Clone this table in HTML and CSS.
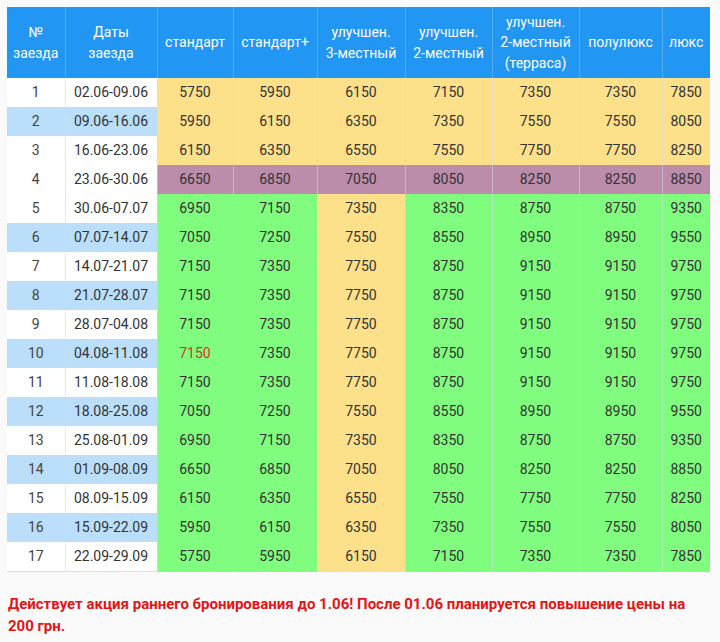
FILE: index.html
```html
<!DOCTYPE html>
<html lang="ru">
<head>
<meta charset="utf-8">
<title>Цены</title>
<link rel="stylesheet" href="styles.css">
</head>
<body>
<table class="prices">
  <colgroup>
    <col class="c1"><col class="c2"><col class="c3"><col class="c4"><col class="c5"><col class="c6"><col class="c7"><col class="c8"><col class="c9">
  </colgroup>
  <thead>
    <tr>
      <th>№<br>заезда</th>
      <th>Даты<br>заезда</th>
      <th>стандарт</th>
      <th>стандарт+</th>
      <th>улучшен.<br>3-местный</th>
      <th>улучшен.<br>2-местный</th>
      <th>улучшен.<br>2-местный<br>(терраса)</th>
      <th>полулюкс</th>
      <th>люкс</th>
    </tr>
  </thead>
  <tbody>
    <tr class="early"><td>1</td><td>02.06-09.06</td><td>5750</td><td>5950</td><td>6150</td><td>7150</td><td>7350</td><td>7350</td><td>7850</td></tr>
    <tr class="early alt"><td>2</td><td>09.06-16.06</td><td>5950</td><td>6150</td><td>6350</td><td>7350</td><td>7550</td><td>7550</td><td>8050</td></tr>
    <tr class="early"><td>3</td><td>16.06-23.06</td><td>6150</td><td>6350</td><td>6550</td><td>7550</td><td>7750</td><td>7750</td><td>8250</td></tr>
    <tr class="peak"><td>4</td><td>23.06-30.06</td><td>6650</td><td>6850</td><td>7050</td><td>8050</td><td>8250</td><td>8250</td><td>8850</td></tr>
    <tr class="summer"><td>5</td><td>30.06-07.07</td><td>6950</td><td>7150</td><td class="y">7350</td><td>8350</td><td>8750</td><td>8750</td><td>9350</td></tr>
    <tr class="summer alt"><td>6</td><td>07.07-14.07</td><td>7050</td><td>7250</td><td class="y">7550</td><td>8550</td><td>8950</td><td>8950</td><td>9550</td></tr>
    <tr class="summer"><td>7</td><td>14.07-21.07</td><td>7150</td><td>7350</td><td class="y">7750</td><td>8750</td><td>9150</td><td>9150</td><td>9750</td></tr>
    <tr class="summer alt"><td>8</td><td>21.07-28.07</td><td>7150</td><td>7350</td><td class="y">7750</td><td>8750</td><td>9150</td><td>9150</td><td>9750</td></tr>
    <tr class="summer"><td>9</td><td>28.07-04.08</td><td>7150</td><td>7350</td><td class="y">7750</td><td>8750</td><td>9150</td><td>9150</td><td>9750</td></tr>
    <tr class="summer alt"><td>10</td><td>04.08-11.08</td><td class="hot">7150</td><td>7350</td><td class="y">7750</td><td>8750</td><td>9150</td><td>9150</td><td>9750</td></tr>
    <tr class="summer"><td>11</td><td>11.08-18.08</td><td>7150</td><td>7350</td><td class="y">7750</td><td>8750</td><td>9150</td><td>9150</td><td>9750</td></tr>
    <tr class="summer alt"><td>12</td><td>18.08-25.08</td><td>7050</td><td>7250</td><td class="y">7550</td><td>8550</td><td>8950</td><td>8950</td><td>9550</td></tr>
    <tr class="summer"><td>13</td><td>25.08-01.09</td><td>6950</td><td>7150</td><td class="y">7350</td><td>8350</td><td>8750</td><td>8750</td><td>9350</td></tr>
    <tr class="summer alt"><td>14</td><td>01.09-08.09</td><td>6650</td><td>6850</td><td class="y">7050</td><td>8050</td><td>8250</td><td>8250</td><td>8850</td></tr>
    <tr class="summer"><td>15</td><td>08.09-15.09</td><td>6150</td><td>6350</td><td class="y">6550</td><td>7550</td><td>7750</td><td>7750</td><td>8250</td></tr>
    <tr class="summer alt"><td>16</td><td>15.09-22.09</td><td>5950</td><td>6150</td><td class="y">6350</td><td>7350</td><td>7550</td><td>7550</td><td>8050</td></tr>
    <tr class="summer last"><td>17</td><td>22.09-29.09</td><td>5750</td><td>5950</td><td class="y">6150</td><td>7150</td><td>7350</td><td>7350</td><td>7850</td></tr>
  </tbody>
</table>
<p class="note">Действует акция раннего бронирования до 1.06! После 01.06 планируется повышение цены на 200 грн.</p>
</body>
</html>
```

FILE: styles.css
```css
html, body {
  margin: 0;
  background: #fafafa;
}
body {
  padding: 7px 10px 0 7px;
  font-family: Roboto, "Liberation Sans", sans-serif;
  font-size: 14px;
  color: #333;
}
.prices {
  width: 703px;
  table-layout: fixed;
  border-collapse: collapse;
  border-spacing: 0;
}
.c1 { width: 58px; }
.c2 { width: 92px; }
.c3 { width: 76px; }
.c4 { width: 84px; }
.c5 { width: 88px; }
.c6 { width: 87px; }
.c7 { width: 87px; }
.c8 { width: 83px; }
.c9 { width: 48px; }

.prices th {
  background: #2196f3;
  color: #fff;
  font-weight: 400;
  height: 71px;
  padding: 0;
  line-height: 20.5px;
  text-align: center;
  vertical-align: middle;
  border-left: 1px solid rgba(255, 255, 255, 0.22);
}
.prices th:first-child { border-left: none; }

.prices td {
  height: 29px;
  padding: 0;
  line-height: 29px;
  text-align: center;
  vertical-align: middle;
  white-space: nowrap;
  border-left: 1px solid rgba(205, 220, 235, 0.55);
}
.prices td:first-child { border-left: none; color: #444; }

.prices tr td:nth-child(-n+2) { background: #fff; }
.prices tr.alt td:nth-child(-n+2) { background: #bbdefb; }

.prices tr.early td:nth-child(n+3) { background: #fde08a; }
.prices tr.peak td:nth-child(n+3) { background: #bb8dab; }
.prices tr.summer td:nth-child(n+3) { background: #80fd7e; }
.prices tr.summer td.y { background: #fde08a; }

.prices tr.last td { border-bottom: 1px solid #d3dfea; }
.prices tr.last td:nth-child(n+3) { border-bottom-color: transparent; }

.prices td.hot { color: #d8351a; }

.note {
  width: 703px;
  margin: 21px 0 0 1px;
  color: #e31414;
  font-weight: 700;
  font-size: 15px;
  line-height: 22px;
}
```
